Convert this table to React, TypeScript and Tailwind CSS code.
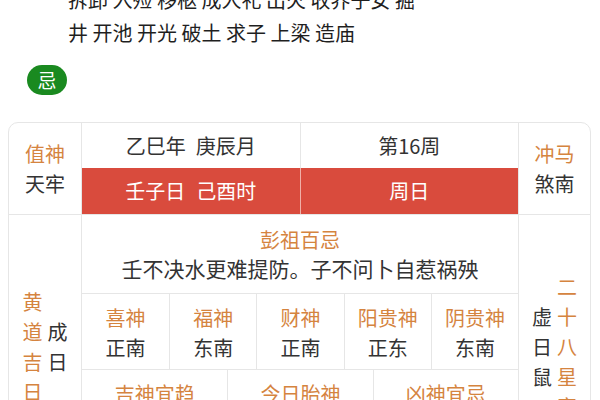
import React from 'react';

const orange = 'text-[#d5843f]';

interface GodItem {
  label: string;
  value: string;
}

const gods: GodItem[] = [
  { label: '喜神', value: '正南' },
  { label: '福神', value: '东南' },
  { label: '财神', value: '正南' },
  { label: '阳贵神', value: '正东' },
  { label: '阴贵神', value: '东南' },
];

const bottomCells = ['吉神宜趋', '今日胎神', '凶神宜忌'];

const VerticalText: React.FC<{ text: string; className?: string }> = ({ text, className }) => (
  <div className={`flex flex-col items-center leading-[30px] ${className ?? ''}`}>
    {text.split('').map((ch, i) => (
      <span key={i}>{ch}</span>
    ))}
  </div>
);

export default function App() {
  return (
    <div className="w-[600px] h-[400px] overflow-hidden bg-white font-['Noto_Sans_CJK_SC',sans-serif] text-[#333]">
      {/* Yi list (continues from above) */}
      <div className="-mt-[17px] pl-[68px] text-[20px] leading-[33px] text-[#1f1f1f]">
        <div>拆卸 入殓 移柩 成人礼 出火 收养子女 掘</div>
        <div>井 开池 开光 破土 求子 上梁 造庙</div>
      </div>

      {/* Ji badge */}
      <div className="ml-[27px] mt-[16px] w-[40px] h-[30px] rounded-full bg-[#1a8a20] text-white text-[19px] flex items-center justify-center">
        忌
      </div>

      {/* Calendar card */}
      <div className="ml-[8px] mt-[27px] w-[583px] border border-[#e6e6e6] rounded-t-[10px] text-[20px]">
        {/* Row A */}
        <div className="flex border-b border-[#e6e6e6]">
          <div className="w-[73px] border-r border-[#e6e6e6] flex flex-col items-center justify-center leading-[30px]">
            <span className={orange}>值神</span>
            <span>天牢</span>
          </div>
          <div className="flex-1 flex flex-col">
            <div className="h-[45px] flex">
              <div className="flex-1 flex items-center justify-center gap-[10px]">
                <span>乙巳年</span>
                <span>庚辰月</span>
              </div>
              <div className="flex-1 border-l border-[#e6e6e6] flex items-center justify-center">第16周</div>
            </div>
            <div className="h-[46px] flex bg-[#d94b3d] text-white">
              <div className="flex-1 flex items-center justify-center gap-[11px]">
                <span>壬子日</span>
                <span>己酉时</span>
              </div>
              <div className="flex-1 border-l border-[#f0b0a8] flex items-center justify-center">周日</div>
            </div>
          </div>
          <div className="w-[72px] border-l border-[#e6e6e6] flex flex-col items-center justify-center leading-[30px]">
            <span className={orange}>冲马</span>
            <span>煞南</span>
          </div>
        </div>

        {/* Row B */}
        <div className="flex h-[264px]">
          <div className="w-[73px] border-r border-[#e6e6e6] flex items-center justify-center gap-[5px]">
            <VerticalText text="黄道吉日" className={orange} />
            <VerticalText text="成日" />
          </div>
          <div className="flex-1 flex flex-col">
            <div className="h-[79px] border-b border-[#e6e6e6] pt-[11px] flex flex-col items-center leading-[28px]">
              <span className={orange}>彭祖百忌</span>
              <span className="text-[21px]">壬不决水更难提防。子不问卜自惹祸殃</span>
            </div>
            <div className="h-[76px] border-b border-[#e6e6e6] grid grid-cols-5">
              {gods.map((g, i) => (
                <div
                  key={g.label}
                  className={`pt-[9px] flex flex-col items-center leading-[30px] ${i > 0 ? 'border-l border-[#e6e6e6]' : ''}`}
                >
                  <span className={orange}>{g.label}</span>
                  <span>{g.value}</span>
                </div>
              ))}
            </div>
            <div className="flex-1 grid grid-cols-3">
              {bottomCells.map((c, i) => (
                <div
                  key={c}
                  className={`pt-[9px] flex flex-col items-center leading-[30px] ${i > 0 ? 'border-l border-[#e6e6e6]' : ''}`}
                >
                  <span className={orange}>{c}</span>
                </div>
              ))}
            </div>
          </div>
          <div className="w-[72px] border-l border-[#e6e6e6] flex items-center justify-center gap-[5px]">
            <VerticalText text="虚日鼠" />
            <VerticalText text="二十八星宿" className={orange} />
          </div>
        </div>
      </div>
    </div>
  );
}
